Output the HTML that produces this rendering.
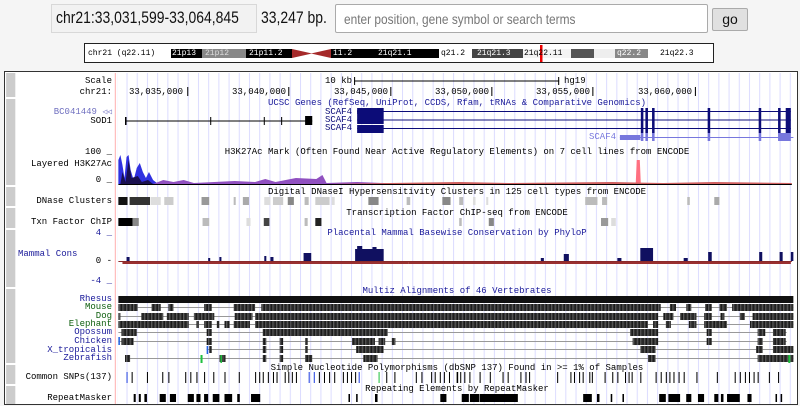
<!DOCTYPE html>
<html><head><meta charset="utf-8"><style>
body{margin:0;width:800px;height:406px;background:#f5f5f5;position:relative;overflow:hidden;font-family:"Liberation Sans",sans-serif}
.a{position:absolute;white-space:nowrap}
.m{position:absolute;white-space:nowrap;font-family:"Liberation Mono",monospace;font-size:9px;line-height:9px}
.r{text-align:right;width:110px;left:2px}
.c{width:682px;left:116px;text-align:center}
</style></head><body>
<div class="a" style="left:51px;top:4px;width:204px;height:27px;background:#f2f2f2;border:1px solid #d8d8d8"></div>
<div class="a" style="left:56px;top:8px;font-size:17px;color:#111;transform:scaleX(0.82);transform-origin:0 0">chr21:33,031,599-33,064,845</div>
<div class="a" style="left:261px;top:8px;font-size:17px;color:#111;transform:scaleX(0.82);transform-origin:0 0">33,247 bp.</div>
<div class="a" style="left:335px;top:4px;width:371px;height:27px;background:#fff;border:1px solid #aaa;border-radius:2px"></div>
<div class="a" style="left:344px;top:11px;font-size:14px;color:#777;transform:scaleX(0.85);transform-origin:0 0">enter position, gene symbol or search terms</div>
<div class="a" style="left:712px;top:8px;width:34px;height:21px;background:#e0e0e0;border:1px solid #aaa;border-radius:2px;font-size:14px;text-align:center;line-height:21px;color:#111">go</div>

<svg class="a" style="left:0;top:0" width="800" height="406">
<rect x="84.5" y="43.5" width="629" height="19" fill="#fff" stroke="#222"/>
<rect x="171" y="49" width="31" height="9" fill="#000"/>
<rect x="202" y="49" width="44" height="9" fill="#888"/>
<rect x="246" y="49" width="46" height="9" fill="#000"/>
<polygon points="292,49 312,53.5 292,58" fill="#a52a2a"/>
<polygon points="331,49 311,53.5 331,58" fill="#a52a2a"/>
<rect x="331" y="49" width="108" height="9" fill="#000"/>
<rect x="439" y="49" width="33" height="9" fill="#fff"/>
<rect x="472" y="49" width="51" height="9" fill="#444"/>
<rect x="523" y="49" width="48" height="9" fill="#f4f4f4"/>
<rect x="571" y="49" width="23" height="9" fill="#555"/>
<rect x="594" y="49" width="21" height="9" fill="#eee"/>
<rect x="615" y="49" width="33" height="9" fill="#888"/>
<rect x="648" y="49" width="64" height="9" fill="#fff"/>
<rect x="540" y="45" width="2.5" height="17" fill="#e00"/>
<rect x="4.5" y="71.5" width="793" height="333" fill="#fff" stroke="#333"/>
</svg>
<div class="m" style="left:88px;top:49px;font-size:8px">chr21 (q22.11)</div>
<div class="m" style="left:172px;top:49px;font-size:8px;color:#fff">21p13</div>
<div class="m" style="left:205px;top:49px;font-size:8px;color:#ddd">21p12</div>
<div class="m" style="left:249px;top:49px;font-size:8px;color:#fff">21p11.2</div>
<div class="m" style="left:333px;top:49px;font-size:8px;color:#fff">11.2</div>
<div class="m" style="left:378px;top:49px;font-size:8px;color:#fff">21q21.1</div>
<div class="m" style="left:441px;top:49px;font-size:8px;color:#000">q21.2</div>
<div class="m" style="left:477px;top:49px;font-size:8px;color:#fff">21q21.3</div>
<div class="m" style="left:524px;top:49px;font-size:8px;color:#000">21q22.11</div>
<div class="m" style="left:617px;top:49px;font-size:8px;color:#fff">q22.2</div>
<div class="m" style="left:660px;top:49px;font-size:8px;color:#000">21q22.3</div>

<svg class="a" style="left:0;top:0" width="800" height="406" viewBox="0 0 1568 406" preserveAspectRatio="none">
<defs>
<pattern id="g" x="228" y="0" width="20" height="406" patternUnits="userSpaceOnUse"><rect x="0" y="0" width="2" height="406" fill="#dcdcff"/></pattern>
<pattern id="s" x="0" y="0" width="7" height="10" patternUnits="userSpaceOnUse"><rect width="7" height="10" fill="#1a1a1a"/><rect x="2" width="2" height="10" fill="#666"/><rect x="5" width="1" height="10" fill="#444"/></pattern>
</defs>
<rect x="230" y="73" width="1326" height="331" fill="url(#g)"/>
<rect x="225" y="73" width="2" height="331" fill="#ffb0b0"/>
<g fill="#ccc"><rect x="12" y="73" width="18" height="24"/><rect x="12" y="99" width="18" height="86"/><rect x="12" y="187" width="18" height="19"/><rect x="12" y="208" width="18" height="20"/><rect x="12" y="230" width="18" height="57"/><rect x="12" y="289" width="18" height="74"/><rect x="12" y="365" width="18" height="19"/><rect x="12" y="386" width="18" height="18"/></g>
<!-- scale -->
<g fill="#000"><rect x="367" y="87" width="2" height="9"/><rect x="565" y="87" width="2" height="9"/><rect x="765" y="87" width="2" height="9"/><rect x="963" y="87" width="2" height="9"/><rect x="1161" y="87" width="2" height="9"/><rect x="1362" y="87" width="2" height="9"/>
<rect x="694" y="80.5" width="402" height="1"/><rect x="694" y="77" width="2" height="8"/><rect x="1094" y="77" width="2" height="8"/></g>
<!-- SOD1 -->
<rect x="245" y="120.5" width="367" height="1" fill="#000"/><rect x="245" y="117" width="3" height="8"/><rect x="412" y="117" width="2" height="8"/><rect x="517" y="117" width="2" height="8"/><rect x="551" y="117" width="2" height="8"/><rect x="598" y="116" width="14" height="9"/>
<text></text>
<!-- SCAF4 -->
<g fill="#0c0c78">
<rect x="700" y="111" width="850" height="1"/><rect x="700" y="108" width="52" height="8"/><rect x="700" y="110" width="20" height="4"/>
<rect x="700" y="119.5" width="850" height="1"/><rect x="700" y="116" width="52" height="8"/>
<rect x="700" y="128" width="850" height="1"/><rect x="700" y="125" width="52" height="8"/>
<rect x="1256" y="108" width="5" height="25"/><rect x="1265" y="108" width="5" height="25"/><rect x="1278" y="108" width="5" height="25"/><rect x="1387" y="108" width="5" height="25"/><rect x="1487" y="108" width="5" height="25"/><rect x="1525" y="108" width="5" height="25"/><rect x="1540" y="108" width="10" height="25"/>
</g>
<g fill="#7777dd"><rect x="1215" y="137" width="340" height="1"/><rect x="1215" y="135" width="40" height="5"/><rect x="1256" y="133" width="5" height="8"/><rect x="1265" y="133" width="5" height="8"/><rect x="1278" y="133" width="5" height="8"/><rect x="1387" y="133" width="5" height="8"/><rect x="1487" y="133" width="5" height="8"/><rect x="1525" y="133" width="25" height="8"/></g>
<!-- H3K27ac -->
<rect x="232" y="184" width="1320" height="1" fill="#000"/>
<polygon points="232,184 232,160 236,155 240,165 244,178 248,157 252,155 256,170 262,180 268,168 274,163 280,172 286,178 292,172 300,180 310,184" fill="#3030e0"/>
<polygon points="236,184 240,172 246,182 252,160 258,178 270,176 278,182 290,180 300,184" fill="#1a1050"/>
<polygon points="300,184 320,180 340,182 360,180 380,183 420,182 460,181 500,182 520,179 540,182 580,178 620,179 632,175 640,183 700,182 800,184" fill="#9050c0"/>
<polygon points="1246,184 1248,160 1254,160 1256,184" fill="#ff7080"/>
<polygon points="640,184 900,182 1000,183 1200,182 1300,183 1400,182 1552,183 1552,184" fill="#d06060"/>
<!-- DNase -->
<g fill="#bbb">
<rect x="232" y="197" width="18" height="8" fill="#111"/><rect x="254" y="197" width="40" height="8" fill="#333"/><rect x="295" y="197" width="20" height="8" fill="#ddd"/><rect x="322" y="197" width="18" height="8" fill="#ccc"/><rect x="395" y="197" width="15" height="8" fill="#999"/><rect x="458" y="197" width="4" height="8"/><rect x="476" y="197" width="12" height="8" fill="#aaa"/><rect x="518" y="197" width="12" height="8" fill="#ddd"/><rect x="535" y="197" width="20" height="8" fill="#ccc"/><rect x="564" y="197" width="12" height="8" fill="#888"/><rect x="597" y="197" width="8" height="8"/><rect x="618" y="197" width="28" height="8" fill="#ccc"/><rect x="650" y="197" width="6" height="8" fill="#ddd"/><rect x="722" y="197" width="20" height="8" fill="#888"/><rect x="797" y="197" width="7" height="8"/><rect x="867" y="197" width="16" height="8" fill="#888"/><rect x="900" y="197" width="8" height="8"/><rect x="927" y="197" width="5" height="8" fill="#ddd"/><rect x="953" y="197" width="4" height="8" fill="#ddd"/><rect x="1147" y="197" width="24" height="8"/><rect x="1180" y="197" width="10" height="8"/><rect x="1347" y="197" width="5" height="8"/><rect x="1400" y="197" width="10" height="8" fill="#aaa"/>
</g>
<g fill="#bbb">
<rect x="232" y="218" width="28" height="8" fill="#000"/><rect x="260" y="218" width="12" height="8" fill="#888"/><rect x="397" y="218" width="13" height="8"/><rect x="483" y="218" width="8" height="8" fill="#ddd"/><rect x="517" y="218" width="11" height="8" fill="#444"/><rect x="597" y="218" width="6" height="8"/><rect x="618" y="218" width="12" height="8" fill="#222"/><rect x="900" y="218" width="5" height="8"/><rect x="958" y="218" width="10" height="8" fill="#888"/><rect x="1178" y="218" width="14" height="8" fill="#999"/><rect x="1198" y="218" width="9" height="8" fill="#ddd"/>
</g>
<!-- cons -->
<rect x="232" y="261" width="1320" height="1" fill="#8a2a2a"/>
<g fill="#9a3030"><rect x="240" y="262" width="560" height="2"/><rect x="800" y="262" width="750" height="2"/></g>
<g fill="#101060">
<rect x="696" y="249" width="56" height="12"/><rect x="700" y="246" width="10" height="4"/><rect x="730" y="247" width="8" height="3"/>
<rect x="595" y="253" width="15" height="8"/><rect x="518" y="256" width="4" height="5"/><rect x="530" y="257" width="6" height="4"/><rect x="430" y="257" width="4" height="4"/><rect x="408" y="258" width="4" height="3"/><rect x="248" y="257" width="6" height="4"/>
<rect x="1255" y="248" width="25" height="13"/><rect x="1105" y="254" width="10" height="7"/><rect x="1388" y="252" width="7" height="9"/><rect x="1488" y="252" width="6" height="9"/><rect x="1528" y="252" width="6" height="9"/><rect x="1550" y="252" width="5" height="9"/><rect x="1210" y="258" width="8" height="3"/><rect x="1060" y="258" width="6" height="3"/><rect x="1340" y="258" width="8" height="3"/>
</g>
<!-- multiz -->
<g fill="#999">
<rect x="232" y="307" width="1323" height="1"/><rect x="232" y="316" width="1323" height="1"/><rect x="232" y="324" width="1323" height="1"/><rect x="232" y="332" width="1310" height="1"/><rect x="232" y="341" width="1310" height="1"/><rect x="405" y="349" width="1150" height="1"/><rect x="245" y="358" width="1310" height="1"/>
</g>
<g fill="url(#s)">
<rect x="232" y="296" width="1323" height="7" fill="#111"/>
<rect x="232" y="304" width="38" height="7"/><rect x="297" y="304" width="18" height="7"/><rect x="330" y="304" width="10" height="7"/><rect x="400" y="304" width="15" height="7"/><rect x="458" y="304" width="42" height="7"/><rect x="512" y="304" width="783" height="7"/><rect x="1313" y="304" width="12" height="7"/><rect x="1345" y="304" width="10" height="7"/><rect x="1382" y="304" width="13" height="7"/><rect x="1410" y="304" width="15" height="7"/><rect x="1435" y="304" width="120" height="7"/>
<rect x="232" y="313" width="4" height="7"/><rect x="277" y="313" width="43" height="7"/><rect x="327" y="313" width="43" height="7"/><rect x="380" y="313" width="40" height="7"/><rect x="460" y="313" width="35" height="7"/><rect x="500" y="313" width="790" height="7"/><rect x="1300" y="313" width="20" height="7"/><rect x="1333" y="313" width="32" height="7"/><rect x="1380" y="313" width="15" height="7"/><rect x="1412" y="313" width="8" height="7"/><rect x="1450" y="313" width="10" height="7"/><rect x="1475" y="313" width="80" height="7"/>
<rect x="232" y="321" width="138" height="7"/><rect x="385" y="321" width="5" height="7"/><rect x="400" y="321" width="15" height="7"/><rect x="425" y="321" width="5" height="7"/><rect x="440" y="321" width="10" height="7"/><rect x="458" y="321" width="32" height="7"/><rect x="500" y="321" width="770" height="7"/><rect x="1280" y="321" width="10" height="7"/><rect x="1305" y="321" width="10" height="7"/><rect x="1350" y="321" width="15" height="7"/><rect x="1380" y="321" width="45" height="7"/><rect x="1470" y="321" width="85" height="7"/>
<rect x="238" y="329" width="30" height="7"/><rect x="405" y="329" width="10" height="7"/><rect x="515" y="329" width="245" height="7"/><rect x="1235" y="329" width="55" height="7"/><rect x="1385" y="329" width="10" height="7"/><rect x="1485" y="329" width="15" height="7"/><rect x="1515" y="329" width="25" height="7"/>
<rect x="238" y="338" width="24" height="7"/><rect x="405" y="338" width="10" height="7"/><rect x="515" y="338" width="7" height="7"/><rect x="548" y="338" width="7" height="7"/><rect x="598" y="338" width="5" height="7"/><rect x="690" y="338" width="45" height="7"/><rect x="742" y="338" width="13" height="7"/><rect x="768" y="338" width="7" height="7"/><rect x="1240" y="338" width="50" height="7"/><rect x="1385" y="338" width="10" height="7"/><rect x="1485" y="338" width="10" height="7"/><rect x="1515" y="338" width="25" height="7"/>
<rect x="410" y="346" width="5" height="7"/><rect x="515" y="346" width="7" height="7"/><rect x="548" y="346" width="7" height="7"/><rect x="598" y="346" width="5" height="7"/><rect x="698" y="346" width="54" height="7"/><rect x="1255" y="346" width="30" height="7"/><rect x="1482" y="346" width="13" height="7"/><rect x="1515" y="346" width="40" height="7"/>
<rect x="245" y="355" width="10" height="7"/><rect x="430" y="355" width="12" height="7"/><rect x="515" y="355" width="7" height="7"/><rect x="548" y="355" width="7" height="7"/><rect x="598" y="355" width="14" height="7"/><rect x="712" y="355" width="28" height="7"/><rect x="1270" y="355" width="15" height="7"/><rect x="1485" y="355" width="70" height="7"/>
</g>
<rect x="232" y="337" width="3" height="8" fill="#2060e0"/><rect x="405" y="346" width="3" height="8" fill="#2060e0"/><rect x="393" y="355" width="4" height="8" fill="#20c040"/><rect x="432" y="355" width="3" height="8" fill="#20c040"/><rect x="1545" y="355" width="4" height="8" fill="#20c040"/>
<!-- SNPs -->
<g fill="#000">
<rect x="248" y="372" width="2" height="11" fill="#2040e0"/><rect x="258" y="372" width="2" height="11"/><rect x="288" y="372" width="2" height="11"/><rect x="318" y="372" width="2" height="11"/><rect x="330" y="372" width="2" height="11"/><rect x="363" y="372" width="2" height="11"/><rect x="373" y="372" width="2" height="11"/><rect x="385" y="372" width="2" height="11"/><rect x="400" y="372" width="2" height="11"/><rect x="418" y="372" width="2" height="11"/><rect x="440" y="372" width="2" height="11"/><rect x="468" y="372" width="2" height="11"/><rect x="500" y="372" width="2" height="11"/><rect x="508" y="372" width="2" height="11"/><rect x="515" y="372" width="2" height="11"/><rect x="525" y="372" width="2" height="11"/><rect x="535" y="372" width="2" height="11"/><rect x="542" y="372" width="2" height="11"/><rect x="558" y="372" width="2" height="11"/><rect x="565" y="372" width="2" height="11"/><rect x="572" y="372" width="2" height="11"/><rect x="580" y="372" width="2" height="11"/><rect x="605" y="372" width="2" height="11" fill="#2040e0"/><rect x="615" y="372" width="2" height="11" fill="#2040e0"/><rect x="625" y="372" width="2" height="11"/><rect x="635" y="372" width="2" height="11"/><rect x="645" y="372" width="2" height="11"/><rect x="655" y="372" width="2" height="11"/><rect x="672" y="372" width="2" height="11"/><rect x="680" y="372" width="2" height="11"/><rect x="688" y="372" width="2" height="11"/><rect x="696" y="372" width="2" height="11"/><rect x="703" y="372" width="2" height="11" fill="#2040e0"/><rect x="742" y="372" width="2" height="11" fill="#20c040"/><rect x="757" y="372" width="2" height="11"/><rect x="773" y="372" width="2" height="11"/><rect x="815" y="372" width="2" height="11"/><rect x="826" y="372" width="2" height="11"/><rect x="845" y="372" width="2" height="11"/><rect x="852" y="372" width="2" height="11"/><rect x="862" y="372" width="2" height="11"/><rect x="870" y="372" width="2" height="11"/><rect x="880" y="372" width="2" height="11"/><rect x="895" y="372" width="3" height="11"/><rect x="902" y="372" width="2" height="11"/><rect x="910" y="372" width="2" height="11"/><rect x="920" y="372" width="2" height="11"/><rect x="940" y="372" width="2" height="11"/><rect x="960" y="372" width="2" height="11"/><rect x="985" y="372" width="2" height="11"/><rect x="995" y="372" width="2" height="11"/><rect x="1020" y="372" width="2" height="11"/><rect x="1030" y="372" width="2" height="11"/><rect x="1037" y="372" width="2" height="11"/><rect x="1092" y="372" width="2" height="11"/><rect x="1118" y="372" width="2" height="11"/><rect x="1125" y="372" width="2" height="11"/><rect x="1135" y="372" width="2" height="11"/><rect x="1142" y="372" width="2" height="11"/><rect x="1155" y="372" width="2" height="11"/><rect x="1160" y="372" width="2" height="11"/><rect x="1185" y="372" width="2" height="11"/><rect x="1200" y="372" width="2" height="11"/><rect x="1210" y="372" width="2" height="11"/><rect x="1225" y="372" width="2" height="11"/><rect x="1232" y="372" width="2" height="11"/><rect x="1238" y="372" width="2" height="11"/><rect x="1255" y="372" width="2" height="11"/><rect x="1285" y="372" width="2" height="11"/><rect x="1295" y="372" width="2" height="11"/><rect x="1305" y="372" width="2" height="11"/><rect x="1312" y="372" width="2" height="11"/><rect x="1320" y="372" width="2" height="11"/><rect x="1330" y="372" width="2" height="11"/><rect x="1340" y="372" width="2" height="11"/><rect x="1365" y="372" width="2" height="11"/><rect x="1405" y="372" width="2" height="11"/><rect x="1440" y="372" width="2" height="11"/><rect x="1450" y="372" width="2" height="11"/><rect x="1460" y="372" width="2" height="11"/><rect x="1468" y="372" width="2" height="11"/><rect x="1477" y="372" width="2" height="11"/><rect x="1485" y="372" width="2" height="11"/><rect x="1507" y="372" width="2" height="11"/><rect x="1525" y="372" width="2" height="11"/>
</g>
<!-- repeats -->
<g fill="#000">
<rect x="262" y="394" width="4" height="8"/><rect x="272" y="394" width="4" height="8"/><rect x="283" y="394" width="5" height="8"/><rect x="313" y="394" width="12" height="8"/><rect x="333" y="394" width="12" height="8"/><rect x="368" y="394" width="12" height="8"/><rect x="385" y="394" width="8" height="8"/><rect x="400" y="394" width="8" height="8"/><rect x="417" y="394" width="13" height="8"/><rect x="440" y="394" width="15" height="8"/><rect x="465" y="394" width="5" height="8"/><rect x="492" y="394" width="18" height="8"/><rect x="683" y="394" width="3" height="8"/><rect x="698" y="394" width="3" height="8"/><rect x="735" y="394" width="5" height="8"/><rect x="863" y="394" width="12" height="8"/><rect x="905" y="394" width="14" height="8"/><rect x="921" y="394" width="18" height="8"/><rect x="940" y="394" width="75" height="8"/><rect x="1143" y="394" width="17" height="8"/><rect x="1170" y="394" width="5" height="8"/><rect x="1197" y="394" width="3" height="8"/><rect x="1220" y="394" width="3" height="8"/><rect x="1292" y="394" width="13" height="8"/><rect x="1310" y="394" width="23" height="8"/><rect x="1345" y="394" width="10" height="8"/><rect x="1368" y="394" width="12" height="8"/><rect x="1400" y="394" width="8" height="8"/><rect x="1413" y="394" width="5" height="8"/><rect x="1425" y="394" width="25" height="8"/><rect x="1465" y="394" width="8" height="8"/><rect x="1520" y="394" width="3" height="8"/><rect x="1530" y="394" width="3" height="8"/>
</g>
</svg>

<div class="m r" style="top:77px">Scale</div>
<div class="m r" style="top:88px">chr21:</div>
<div class="m" style="left:129px;top:88px">33,035,000</div>
<div class="m" style="left:232px;top:88px">33,040,000</div>
<div class="m" style="left:334px;top:88px">33,045,000</div>
<div class="m" style="left:435px;top:88px">33,050,000</div>
<div class="m" style="left:536px;top:88px">33,055,000</div>
<div class="m" style="left:638px;top:88px">33,060,000</div>
<div class="m" style="left:325px;top:77px">10 kb</div>
<div class="m" style="left:564px;top:77px">hg19</div>
<div class="m c" style="top:99px;color:#1a1a9a">UCSC Genes (RefSeq, UniProt, CCDS, Rfam, tRNAs &amp; Comparative Genomics)</div>
<div class="m r" style="top:108px;color:#7070c0">BC041449 <span style="font-size:8px">◁◁</span></div>
<div class="m r" style="top:117px">SOD1</div>
<div class="m" style="left:325px;top:108px;color:#0c0c78">SCAF4</div>
<div class="m" style="left:325px;top:116px;color:#0c0c78">SCAF4</div>
<div class="m" style="left:325px;top:124px;color:#0c0c78">SCAF4</div>
<div class="m" style="left:589px;top:133px;color:#7777dd">SCAF4</div>
<div class="m r" style="top:148px">100 _</div>
<div class="m r" style="top:160px">Layered H3K27Ac</div>
<div class="m r" style="top:176px">0 _</div>
<div class="m c" style="top:148px">H3K27Ac Mark (Often Found Near Active Regulatory Elements) on 7 cell lines from ENCODE</div>
<div class="m c" style="top:188px">Digital DNaseI Hypersensitivity Clusters in 125 cell types from ENCODE</div>
<div class="m r" style="top:197px">DNase Clusters</div>
<div class="m c" style="top:209px">Transcription Factor ChIP-seq from ENCODE</div>
<div class="m r" style="top:218px">Txn Factor ChIP</div>
<div class="m r" style="top:229px;color:#1a1a9a">4 _</div>
<div class="m c" style="top:229px;color:#1a1a9a">Placental Mammal Basewise Conservation by PhyloP</div>
<div class="m" style="left:18px;top:250px;color:#1a1a9a">Mammal Cons</div>
<div class="m r" style="top:257px">0 -</div>
<div class="m r" style="top:277px;color:#1a1a9a">-4 _</div>
<div class="m c" style="top:287px;color:#1a1a9a">Multiz Alignments of 46 Vertebrates</div>
<div class="m r" style="top:295px;color:#1a1a9a">Rhesus</div>
<div class="m r" style="top:303px;color:#106010">Mouse</div>
<div class="m r" style="top:312px;color:#106010">Dog</div>
<div class="m r" style="top:320px;color:#106010">Elephant</div>
<div class="m r" style="top:328px;color:#1a1a9a">Opossum</div>
<div class="m r" style="top:337px;color:#1a1a9a">Chicken</div>
<div class="m r" style="top:346px;color:#1a1a9a">X_tropicalis</div>
<div class="m r" style="top:354px;color:#1a1a9a">Zebrafish</div>
<div class="m c" style="top:364px">Simple Nucleotide Polymorphisms (dbSNP 137) Found in &gt;= 1% of Samples</div>
<div class="m r" style="top:373px">Common SNPs(137)</div>
<div class="m c" style="top:385px">Repeating Elements by RepeatMasker</div>
<div class="m r" style="top:394px">RepeatMasker</div>
</body></html>
